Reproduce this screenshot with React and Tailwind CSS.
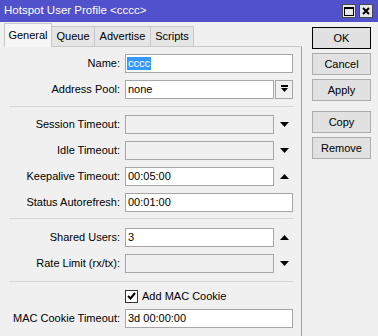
import React from "react";

function TriDown() {
  return (
    <svg width="9" height="5" viewBox="0 0 9 5">
      <path d="M0 0h9L4.5 5z" fill="#000" />
    </svg>
  );
}

function TriUp() {
  return (
    <svg width="9" height="5" viewBox="0 0 9 5">
      <path d="M0 5h9L4.5 0z" fill="#000" />
    </svg>
  );
}

function PoolIcon() {
  return (
    <svg width="7" height="8" viewBox="0 0 7 8">
      <rect x="0" y="0" width="7" height="2" fill="#000" />
      <path d="M0 3h7L3.5 7z" fill="#000" />
    </svg>
  );
}

function Row({ label, children }) {
  return (
    <div className="flex h-[26px] items-center">
      <div className="w-[120px] text-right whitespace-nowrap">{label}</div>
      <div className="ml-[5px] flex items-center">{children}</div>
    </div>
  );
}

function Box({ value, wide, disabled }) {
  return (
    <div
      className={`flex h-[19px] items-center border border-[#a6a6a6] pl-[2px] ${wide ? "w-[168px]" : "w-[149px]"} ${
        disabled ? "bg-[#f0f0f0]" : "bg-white"
      }`}
    >
      {value}
    </div>
  );
}

function Arrow({ up }) {
  return <div className="ml-[1px] flex w-[19px] justify-center">{up ? <TriUp /> : <TriDown />}</div>;
}

function Sep({ className }) {
  return <div className={`ml-[9px] h-px w-[284px] bg-[#d7d7d7] ${className}`} />;
}

function Btn({ children, main, className = "" }) {
  return (
    <div
      className={`flex h-[22px] w-[59px] items-center justify-center bg-[#e1e1e1] border ${
        main ? "border-black" : "border-[#adadad]"
      } ${className}`}
    >
      {children}
    </div>
  );
}

export default function App() {
  return (
    <div
      className="h-[336px] w-[378px] overflow-hidden bg-[#f0f0f0] text-[11px] leading-none text-black"
      style={{ fontFamily: '"Liberation Sans", Arial, sans-serif' }}
    >
      {/* title bar */}
      <div className="flex h-[22px] items-center bg-[#5151cb] pl-[4px] pr-[5px] text-white">
        <span className="text-[11.5px]">Hotspot User Profile &lt;cccc&gt;</span>
        <div className="ml-auto flex gap-[3px]">
          <div className="flex h-[14px] w-[14px] items-center justify-center border border-[#4a4a4a] bg-[#e8e8e8]">
            <div className="h-[9px] w-[10px] border border-black border-t-2" />
          </div>
          <div className="flex h-[14px] w-[14px] items-center justify-center border border-[#4a4a4a] bg-[#e8e8e8]">
            <svg width="8" height="8" viewBox="0 0 8 8">
              <path d="M1 1l6 6M7 1l-6 6" stroke="#000" strokeWidth="2" />
            </svg>
          </div>
        </div>
      </div>

      <div className="flex">
        {/* left: tabs + form */}
        <div className="w-[302px]">
          <div className="flex h-[25px] items-end pl-[4px]">
            <div className="flex h-[24px] w-[48px] items-center justify-center border-x border-t border-[#c8c8c8] bg-[#f6f6f6] pb-[1px]">
              General
            </div>
            <div className="flex h-[21px] w-[43px] items-center justify-center border-y border-r border-[#c8c8c8] bg-[#e5e5e5]">
              Queue
            </div>
            <div className="flex h-[21px] w-[56px] items-center justify-center border-y border-r border-[#c8c8c8] bg-[#e5e5e5]">
              Advertise
            </div>
            <div className="flex h-[21px] w-[43px] items-center justify-center border-y border-r border-[#c8c8c8] bg-[#e5e5e5]">
              Scripts
            </div>
            <div className="h-px flex-1 bg-[#c8c8c8]" />
          </div>

          <div className="h-[289px] border-r border-[#a0a0a0] pt-[3px]">
            <Row label="Name:">
              <div className="flex h-[19px] w-[168px] items-center border border-[#a6a6a6] bg-white pl-[1px]">
                <span className="bg-[#3399ff] px-[1px] py-[1px] text-white">cccc</span>
              </div>
            </Row>
            <Row label="Address Pool:">
              <Box value="none" />
              <div className="ml-[1px] flex h-[19px] w-[18px] items-center justify-center border border-[#a6a6a6] bg-[#f0f0f0]">
                <PoolIcon />
              </div>
            </Row>
            <Sep className="mt-[4px] mb-[4px]" />
            <Row label="Session Timeout:">
              <Box disabled />
              <Arrow />
            </Row>
            <Row label="Idle Timeout:">
              <Box disabled />
              <Arrow />
            </Row>
            <Row label="Keepalive Timeout:">
              <Box value="00:05:00" />
              <Arrow up />
            </Row>
            <Row label="Status Autorefresh:">
              <Box value="00:01:00" wide />
            </Row>
            <Sep className="mt-[3px] mb-[5px]" />
            <Row label="Shared Users:">
              <Box value="3" />
              <Arrow up />
            </Row>
            <Row label="Rate Limit (rx/tx):">
              <Box disabled />
              <Arrow />
            </Row>
            <Sep className="mt-[5px] mb-[5px]" />
            <div className="flex h-[18px] items-center pl-[125px]">
              <div className="flex h-[13px] w-[13px] items-center justify-center border border-[#333] bg-white">
                <svg width="9" height="8" viewBox="0 0 9 8">
                  <path d="M1 4l2.5 2.5L8 1" stroke="#000" strokeWidth="2" fill="none" />
                </svg>
              </div>
              <span className="ml-[4px]">Add MAC Cookie</span>
            </div>
            <Row label="MAC Cookie Timeout:">
              <Box value="3d 00:00:00" wide />
            </Row>
          </div>
        </div>

        {/* right: buttons */}
        <div className="ml-[10px] flex flex-col pt-[5px]">
          <Btn main>OK</Btn>
          <Btn className="mt-[4px]">Cancel</Btn>
          <Btn className="mt-[4px]">Apply</Btn>
          <Btn className="mt-[10px]">Copy</Btn>
          <Btn className="mt-[4px]">Remove</Btn>
        </div>
      </div>
    </div>
  );
}
